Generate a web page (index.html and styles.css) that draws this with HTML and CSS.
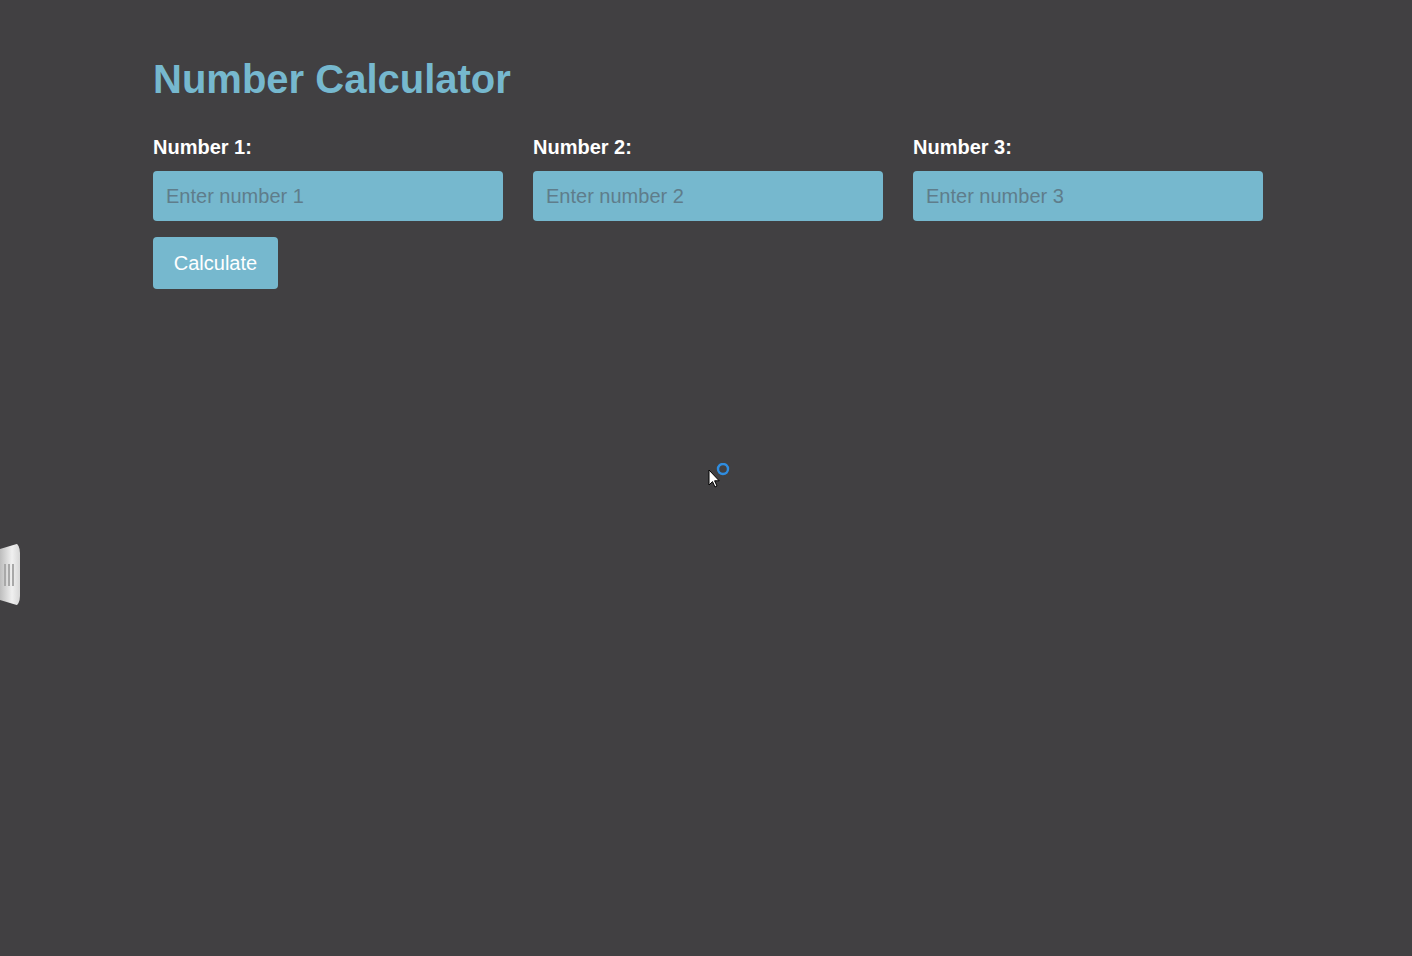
FILE: index.html
```html
<!DOCTYPE html>
<html lang="en">
<head>
<meta charset="utf-8">
<title>Number Calculator</title>
<link rel="stylesheet" href="styles.css">
</head>
<body>
<main class="container">
  <h1 class="title">Number Calculator</h1>
  <div class="fields">
    <div class="field">
      <label class="label" for="n1">Number 1:</label>
      <input class="input" id="n1" type="text" placeholder="Enter number 1">
    </div>
    <div class="field">
      <label class="label" for="n2">Number 2:</label>
      <input class="input" id="n2" type="text" placeholder="Enter number 2">
    </div>
    <div class="field">
      <label class="label" for="n3">Number 3:</label>
      <input class="input" id="n3" type="text" placeholder="Enter number 3">
    </div>
  </div>
  <button class="btn" type="button">Calculate</button>
</main>

<div class="side-tab">
  <span class="grip"></span><span class="grip"></span><span class="grip"></span>
</div>

<div class="cursor">
  <svg width="30" height="30" viewBox="0 0 30 30">
    <circle cx="15" cy="6" r="5" fill="none" stroke="#2f8de0" stroke-width="2.4"/>
    <path d="M1 7 L1 22 L4.5 18.6 L7 24 L9 23 L6.6 17.8 L11.2 17.8 Z" fill="#fff" stroke="#000" stroke-width="1" stroke-linejoin="round"/>
  </svg>
</div>
</body>
</html>
```

FILE: styles.css
```css
* { box-sizing: border-box; }

html, body {
  margin: 0;
  padding: 0;
  background: #414042;
  height: 100%;
}

body {
  font-family: "Liberation Sans", Arial, sans-serif;
  color: #ffffff;
  position: relative;
  overflow: hidden;
}

.container {
  width: 1110px;
  margin-left: 153px;
  padding-top: 55px;
}

.title {
  margin: 0 0 32px;
  font-size: 40px;
  line-height: 48px;
  font-weight: 700;
  color: #76b8ce;
}

.fields {
  display: flex;
  gap: 30px;
}

.field {
  width: 350px;
  display: flex;
  flex-direction: column;
}

.label {
  font-size: 20px;
  font-weight: 700;
  line-height: 24px;
  margin-bottom: 12px;
}

.input {
  height: 50px;
  width: 100%;
  border: none;
  border-radius: 4px;
  background: #76b8ce;
  padding: 0 13px;
  font-family: "Liberation Sans", Arial, sans-serif;
  font-size: 20px;
  color: #333;
  outline: none;
}

.input::placeholder {
  color: #5f7d8b;
  opacity: 1;
}

.btn {
  margin-top: 16px;
  width: 125px;
  height: 52px;
  border: none;
  border-radius: 4px;
  background: #76b8ce;
  color: #ffffff;
  font-family: "Liberation Sans", Arial, sans-serif;
  font-size: 20px;
  padding: 0;
  cursor: pointer;
}

.side-tab {
  position: absolute;
  left: 0;
  top: 543px;
  width: 20px;
  height: 63px;
  background: linear-gradient(to right, #bdbdbd, #f0f0f0 60%, #d6d6d6);
  border-radius: 0 5px 5px 0 / 0 10px 10px 0;
  clip-path: polygon(0 6px, 100% 0, 100% 100%, 0 calc(100% - 6px));
  display: flex;
  align-items: center;
  justify-content: flex-end;
  gap: 2px;
  padding-right: 6px;
}

.grip {
  width: 2px;
  height: 22px;
  background: #a8a8a8;
}

.cursor {
  position: absolute;
  left: 708px;
  top: 463px;
  width: 30px;
  height: 30px;
}
```
